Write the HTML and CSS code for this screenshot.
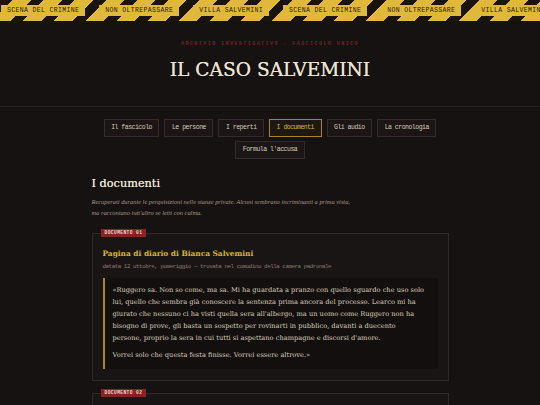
FILE: index.html
```html
<!DOCTYPE html>
<html lang="it">
<head>
<meta charset="utf-8">
<title>Il caso Salvemini</title>
<link rel="stylesheet" href="styles.css">
</head>
<body>
<div class="tape">
  <span class="tape-label">SCENA DEL CRIMINE</span>
  <span class="tape-label">NON OLTREPASSARE</span>
  <span class="tape-label">VILLA SALVEMINI</span>
  <span class="tape-label">SCENA DEL CRIMINE</span>
  <span class="tape-label">NON OLTREPASSARE</span>
  <span class="tape-label">VILLA SALVEMINI</span>
</div>
<header class="masthead">
  <p class="kicker">ARCHIVIO INVESTIGATIVO · FASCICOLO UNICO</p>
  <h1 class="title">IL CASO SALVEMINI</h1>
</header>
<nav class="tabs">
  <a class="tab">Il fascicolo</a>
  <a class="tab">Le persone</a>
  <a class="tab">I reperti</a>
  <a class="tab active">I documenti</a>
  <a class="tab">Gli audio</a>
  <a class="tab">La cronologia</a>
  <a class="tab">Formula l'accusa</a>
</nav>
<main class="content">
  <h2 class="section-title">I documenti</h2>
  <p class="intro">Recuperati durante le perquisizioni nelle stanze private. Alcuni sembrano incriminanti a prima vista, ma raccontano tutt'altro se letti con calma.</p>
  <article class="doc">
    <span class="badge">DOCUMENTO 01</span>
    <h3 class="doc-title">Pagina di diario di Bianca Salvemini</h3>
    <p class="doc-meta">datata 12 ottobre, pomeriggio — trovata nel comodino della camera padronale</p>
    <blockquote class="doc-quote">
      <p>«Ruggero sa. Non so come, ma sa. Mi ha guardata a pranzo con quello sguardo che uso solo lui, quello che sembra già conoscere la sentenza prima ancora del processo. Learco mi ha giurato che nessuno ci ha visti quella sera all'albergo, ma un uomo come Ruggero non ha bisogno di prove, gli basta un sospetto per rovinarti in pubblico, davanti a duecento persone,&nbsp;proprio la sera in cui tutti si aspettano champagne e discorsi d'amore.</p>
      <p>Vorrei solo che questa festa finisse. Vorrei essere altrove.»</p>
    </blockquote>
  </article>
  <article class="doc">
    <span class="badge">DOCUMENTO 02</span>
    <h3 class="doc-title">Biglietto anonimo</h3>
    <p class="doc-meta">trovato nella biblioteca</p>
  </article>
</main>
</body>
</html>
```
FILE: styles.css
```css
* { box-sizing: border-box; }
html, body { margin: 0; padding: 0; }
body {
  background: #171212;
  color: #d8cfbd;
  font-family: "Liberation Mono", "DejaVu Sans Mono", monospace;
  overflow: hidden;
  height: 405px;
}
.tape {
  height: 21px;
  display: flex;
  align-items: center;
  gap: 14px;
  padding-left: 1px;
  overflow: hidden;
  white-space: nowrap;
  background: repeating-linear-gradient(135deg, #1a140c 0 9px, #e0b93a 9px 22px);
}
.tape-label {
  flex: none;
  background: #e0b93a;
  height: 11px;
  line-height: 11px;
  padding: 0 6px;
  font-size: 6.5px;
  letter-spacing: 0.35px;
  color: #2a2010;
}
.masthead {
  text-align: center;
  border-bottom: 1px solid #2a2222;
  padding: 19px 0 22px;
}
.kicker {
  margin: 0;
  font-size: 5px;
  line-height: 8px;
  letter-spacing: 1.45px;
  color: #742222;
  font-weight: bold;
}
.title {
  margin: 8px 0 0;
  font-family: "DejaVu Serif", serif;
  font-size: 18.6px;
  line-height: 28px;
  font-weight: normal;
  color: #ece3d0;
  text-shadow: 0 0 0.6px #ece3d0;
}
.tabs {
  width: 357px;
  margin: 12px auto 0;
  display: flex;
  flex-wrap: wrap;
  justify-content: center;
  gap: 4px 5px;
}
.tab {
  height: 18px;
  line-height: 16px;
  padding: 0 6.5px;
  border: 1px solid #352c2a;
  background: #1b1515;
  color: #d4cbb8;
  font-size: 6.5px;
  letter-spacing: -0.5px;
}
.tab.active {
  border-color: #a8852c;
  color: #dcb43c;
  background: #1e1812;
}
.content {
  width: 357px;
  margin: 0 auto;
  padding-top: 18px;
}
.section-title {
  margin: 0;
  font-family: "DejaVu Serif", serif;
  font-size: 11.3px;
  line-height: 14px;
  font-weight: normal;
  color: #ebe3d2;
  text-shadow: 0 0 0.5px #ebe3d2;
}
.intro {
  margin: 5px 0 0;
  font-family: "Liberation Serif", serif;
  font-style: italic;
  font-size: 6.4px;
  line-height: 11px;
  color: #a39684;
  max-width: 262px;
}
.doc {
  position: relative;
  margin-top: 15px;
  border: 1px solid #2f2828;
  background: #1a1515;
  padding: 15px 10px 11px;
}
.doc + .doc { margin-top: 12px; }
.badge {
  position: absolute;
  left: 8px;
  top: -5px;
  background: #8a2224;
  color: #e8d8c8;
  font-size: 4.6px;
  letter-spacing: 0.4px;
  height: 8px;
  line-height: 8px;
  padding: 0 4px;
  font-weight: bold;
}
.doc-title {
  margin: 0;
  font-family: "DejaVu Serif", serif;
  font-size: 7.4px;
  line-height: 10px;
  color: #dcb43c;
  font-weight: bold;
}
.doc-meta {
  margin: 4px 0 0;
  font-size: 5.8px;
  line-height: 8px;
  letter-spacing: -0.43px;
  color: #877b6c;
}
.doc-quote {
  margin: 7px 0 0;
  background: #130f0e;
  border-left: 2px solid #a8852c;
  padding: 6px 11px 8px 8px;
}
.doc-quote p {
  margin: 0;
  font-family: "DejaVu Serif", serif;
  font-size: 6.65px;
  line-height: 12px;
  color: #d8cfbd;
}
.doc-quote p + p { margin-top: 5px; }
```
